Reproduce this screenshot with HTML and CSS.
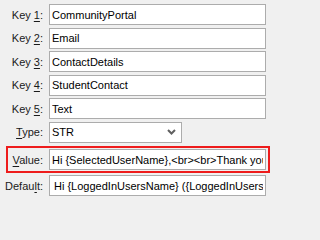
FILE: index.html
```html
<!DOCTYPE html>
<html>
<head>
<meta charset="utf-8">
<link rel="stylesheet" href="styles.css">
</head>
<body>
<div class="form">
  <div class="row"><label class="lbl">Key <u>1</u>:</label><input class="field" value="CommunityPortal"></div>
  <div class="row"><label class="lbl">Key <u>2</u>:</label><input class="field" value="Email"></div>
  <div class="row"><label class="lbl">Key <u>3</u>:</label><input class="field" value="ContactDetails"></div>
  <div class="row"><label class="lbl">Key <u>4</u>:</label><input class="field" value="StudentContact"></div>
  <div class="row"><label class="lbl">Key <u>5</u>:</label><input class="field" value="Text"></div>
  <div class="row"><label class="lbl"><u>T</u>ype:</label>
    <div class="select"><span>STR</span>
      <svg class="chev" width="9" height="6" viewBox="0 0 9 6"><path d="M1 1 L4.5 4.5 L8 1" fill="none" stroke="#606060" stroke-width="2"/></svg>
    </div>
  </div>
  <div class="row highlight"><label class="lbl lbl-in"><u>V</u>alue:</label><input class="field" value="Hi {SelectedUserName},&lt;br&gt;&lt;br&gt;Thank you for contacting us"></div>
  <div class="row"><label class="lbl">Defau<u>l</u>t:</label><input class="field field-def" value="Hi {LoggedInUsersName} ({LoggedInUsersID})"></div>
</div>
</body>
</html>
```
FILE: styles.css
```css
html, body {
  margin: 0;
  padding: 0;
  background: #f0f0f0;
}
body {
  font-family: "Liberation Sans", Arial, sans-serif;
  font-size: 11px;
  color: #000;
}
.form {
  display: flex;
  flex-direction: column;
  gap: 2.5px;
  padding-top: 4px;
}
.row {
  display: flex;
  align-items: center;
  gap: 6px;
  height: 21px;
}
.lbl {
  width: 43px;
  text-align: right;
  flex: none;
  color: #1a1a1a;
  white-space: nowrap;
}
.lbl u {
  text-decoration-thickness: 1px;
  text-underline-offset: 2px;
}
.field {
  appearance: none;
  box-sizing: border-box;
  width: 217px;
  height: 21px;
  margin: 0;
  border: 1px solid #acacac;
  background: #fff;
  padding: 0 2px;
  font-family: "Liberation Sans", Arial, sans-serif;
  font-size: 11px;
  color: #000;
  outline: none;
}
.field-def {
  padding-left: 4px;
}
.select {
  box-sizing: border-box;
  width: 133px;
  height: 21px;
  border: 1px solid #acacac;
  background: #fff;
  display: flex;
  align-items: center;
  justify-content: space-between;
  padding: 0 5px 0 2px;
}
.highlight {
  box-sizing: border-box;
  margin: 1px 1px -0.5px 6px;
  height: 27px;
  border: 2px solid #ee1c1c;
  width: 264px;
  padding-top: 0;
}
.lbl-in {
  width: 35px;
}
```
